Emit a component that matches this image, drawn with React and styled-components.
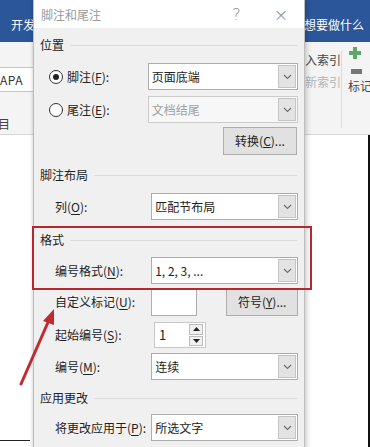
import React from "react";
import styled, { createGlobalStyle } from "styled-components";

const GlobalStyle = createGlobalStyle`
  html, body { margin: 0; padding: 0; }
  body {
    font-family: "Noto Sans CJK SC", "Noto Sans", "Liberation Sans", sans-serif;
    background: #ffffff;
  }
`;

// --- Word window behind the dialog ---

const Screen = styled.div`
  position: relative;
  width: 370px;
  height: 447px;
  overflow: hidden;
  display: flex;
  flex-direction: column;
  background: #ffffff;
`;

const TopBand = styled.div`
  height: 42px;
  flex-shrink: 0;
  background: #2b579a;
  display: flex;
  justify-content: space-between;
  align-items: flex-end;
  padding: 0 6px 8px 11px;
  color: #ffffff;
  font-size: 12px;
  line-height: 18px;
  box-sizing: border-box;
`;

const Ribbon = styled.div`
  height: 92px;
  flex-shrink: 0;
  background: #f4f4f4;
  border-bottom: 1px solid #d6d6d6;
  display: flex;
  justify-content: space-between;
  font-size: 12px;
  color: #444;
`;

const RibbonLeft = styled.div`
  width: 33px;
  display: flex;
  flex-direction: column;
  padding-top: 25px;
`;

const StyleBox = styled.div`
  height: 23px;
  border-top: 1px solid #c6c6c6;
  border-bottom: 1px solid #c6c6c6;
  background: #ffffff;
  display: flex;
  align-items: center;
  font-size: 12px;
  color: #333;
  letter-spacing: 0.5px;
`;

const RibbonLabel = styled.div`
  margin-top: 23px;
  line-height: 18px;
  margin-left: -2px;
`;

const RibbonRight = styled.div`
  width: 65px;
  display: flex;
  padding-top: 9px;
`;

const IndexGroup = styled.div`
  width: 42px;
  display: flex;
  flex-direction: column;
  gap: 4px;
  line-height: 18px;
  border-right: 1px solid #dcdcdc;
  margin-bottom: 6px;
`;

const IndexItem = styled.div`
  color: ${(p) => (p.$muted ? "#b5b5b5" : "#444")};
  white-space: nowrap;
`;

const MarkGroup = styled.div`
  flex: 1;
  display: flex;
  flex-direction: column;
  align-items: flex-start;
  padding-left: 6px;
  line-height: 18px;
  white-space: nowrap;
  margin-top: -4px;
`;

const Doc = styled.div`
  flex: 1;
  display: flex;
  justify-content: flex-end;
  align-items: flex-end;
`;

const DocEdge = styled.div`
  width: 2px;
  align-self: stretch;
  background: #111;
`;

const BottomLine = styled.div`
  position: absolute;
  left: 0;
  top: 440px;
  width: 30px;
  height: 1px;
  background: #222;
`;

// --- Dialog ---

const Dialog = styled.div`
  position: absolute;
  left: 33px;
  top: 0;
  width: 272px;
  height: 470px;
  background: #f0f0f0;
  border-left: 1px solid #bdbdbd;
  border-right: 1px solid #bdbdbd;
  box-shadow: 2px 0 5px rgba(0, 0, 0, 0.18), -1px 0 3px rgba(0, 0, 0, 0.1);
  box-sizing: border-box;
  font-size: 12px;
  color: #222;
`;

const TitleBar = styled.div`
  height: 28px;
  background: #ffffff;
  display: flex;
  align-items: center;
  padding-left: 7px;
  font-size: 12px;
  color: #9a9a9a;
`;

const TitleText = styled.div`
  flex: 1;
`;

const TitleButton = styled.div`
  width: ${(p) => p.$w || 46}px;
  text-align: center;
  color: #8a8a8a;
  font-size: ${(p) => p.$size || 14}px;
  font-family: "DejaVu Sans", sans-serif;
  font-weight: 300;
`;

const Body = styled.div`
  padding: 8px 6px 0 6px;
  display: flex;
  flex-direction: column;
`;

const Heading = styled.div`
  display: flex;
  align-items: center;
  gap: 6px;
  height: 18px;
  line-height: 18px;
  margin-top: ${(p) => p.$mt || 0}px;
  margin-bottom: ${(p) => p.$mb || 9}px;
  &::after {
    content: "";
    flex: 1;
    height: 1px;
    background: #dadada;
    margin-right: 1px;
  }
`;

const Row = styled.div`
  display: flex;
  align-items: center;
  height: ${(p) => p.$h || 27}px;
  margin-top: ${(p) => p.$mt || 0}px;
  padding-left: ${(p) => (p.$radio ? 9 : 15)}px;
`;

const Label = styled.div`
  width: ${(p) => (p.$radio ? 81 : 99)}px;
  white-space: nowrap;
  line-height: 18px;
  u {
    text-underline-offset: 2px;
  }
`;

const RadioCircle = styled.div`
  width: 12px;
  height: 12px;
  border-radius: 50%;
  border: 1px solid #333;
  background: #fff;
  margin-right: 4px;
  display: flex;
  align-items: center;
  justify-content: center;
  flex-shrink: 0;
  &::after {
    content: "";
    width: 6px;
    height: 6px;
    border-radius: 50%;
    background: ${(p) => (p.$checked ? "#222" : "transparent")};
  }
`;

const Select = styled.div`
  width: 151px;
  height: 100%;
  box-sizing: border-box;
  border: 1px solid ${(p) => (p.$disabled ? "#cccccc" : "#adadad")};
  background: ${(p) => (p.$disabled ? "#f7f7f7" : "#ffffff")};
  display: flex;
  align-items: stretch;
  color: ${(p) => (p.$disabled ? "#a0a0a0" : "#222")};
`;

const SelectValue = styled.div`
  flex: 1;
  display: flex;
  align-items: center;
  padding-left: 3px;
  line-height: 18px;
`;

const SelectArrow = styled.div`
  width: 16px;
  margin: 1px;
  background: #e3e3e3;
  border: 1px solid #c4c4c4;
  display: flex;
  align-items: center;
  justify-content: center;
`;

const Button = styled.div`
  width: 74px;
  height: 100%;
  box-sizing: border-box;
  background: #e1e1e1;
  border: 1px solid #adadad;
  display: flex;
  align-items: center;
  justify-content: center;
  line-height: 18px;
  color: #222;
  margin-left: ${(p) => p.$ml || 0}px;
`;

const ButtonRow = styled.div`
  display: flex;
  justify-content: flex-end;
  height: 28px;
  margin-top: 4px;
  padding-right: 1px;
`;

const TextBox = styled.div`
  width: 48px;
  height: 100%;
  box-sizing: border-box;
  background: #fff;
  border: 1px solid #adadad;
`;

const SpinBox = styled.div`
  width: 52px;
  height: 100%;
  box-sizing: border-box;
  background: #fff;
  border: 1px solid #c9c9c9;
  display: flex;
  align-items: center;
  padding: 1px;
`;

const SpinValue = styled.div`
  flex: 1;
  padding-left: 3px;
  line-height: 18px;
  font-size: 13px;
`;

const SpinButtons = styled.div`
  width: 14px;
  align-self: stretch;
  display: flex;
  flex-direction: column;
  gap: 1px;
  margin-right: 1px;
`;

const SpinButton = styled.div`
  flex: 1;
  background: #f0f0f0;
  border: 1px solid #bcbcbc;
  display: flex;
  align-items: center;
  justify-content: center;
`;

// --- annotations laid over the screenshot ---

const RedBox = styled.div`
  position: absolute;
  left: 32px;
  top: 226px;
  width: 280px;
  height: 64px;
  box-sizing: border-box;
  border: 2px solid #b8272e;
`;

const ArrowSvg = styled.svg`
  position: absolute;
  left: 0;
  top: 290px;
`;

const Chevron = () => (
  <svg width="9" height="6" viewBox="0 0 9 6">
    <path d="M1 1 L4.5 4.5 L8 1" fill="none" stroke="#6d6d6d" strokeWidth="1.1" />
  </svg>
);

const Triangle = ({ up }) => (
  <svg width="7" height="4" viewBox="0 0 7 4">
    <path d={up ? "M0 4 L3.5 0 L7 4 Z" : "M0 0 L3.5 4 L7 0 Z"} fill="#222" />
  </svg>
);

const Dropdown = ({ value, disabled }) => (
  <Select $disabled={disabled}>
    <SelectValue>{value}</SelectValue>
    <SelectArrow>
      <Chevron />
    </SelectArrow>
  </Select>
);

const App = () => {
  return (
    <>
      <GlobalStyle />
      <Screen>
        <TopBand>
          <span>开发</span>
          <span>想要做什么</span>
        </TopBand>
        <Ribbon>
          <RibbonLeft>
            <StyleBox>APA</StyleBox>
            <RibbonLabel>目</RibbonLabel>
          </RibbonLeft>
          <RibbonRight>
            <IndexGroup>
              <IndexItem>入索引</IndexItem>
              <IndexItem $muted>新索引</IndexItem>
            </IndexGroup>
            <MarkGroup>
              <svg width="14" height="30" viewBox="0 0 14 30">
                <path d="M5 0 H9 V4 H13 V8 H9 V12 H5 V8 H1 V4 H5 Z" fill="#5aa86a" />
                <rect x="3" y="22" width="11" height="5" fill="#777" />
              </svg>
              <span>标记</span>
            </MarkGroup>
          </RibbonRight>
        </Ribbon>
        <Doc>
          <DocEdge />
        </Doc>
        <BottomLine />

        <Dialog>
          <TitleBar>
            <TitleText>脚注和尾注</TitleText>
            <TitleButton $size={16} $w={43}>?</TitleButton>
            <TitleButton $size={18}>×</TitleButton>
          </TitleBar>
          <Body>
            <Heading>位置</Heading>
            <Row $radio>
              <RadioCircle $checked />
              <Label $radio>
                脚注(<u>F</u>):
              </Label>
              <Dropdown value="页面底端" />
            </Row>
            <Row $radio $mt={6}>
              <RadioCircle />
              <Label $radio>
                尾注(<u>E</u>):
              </Label>
              <Dropdown value="文档结尾" disabled />
            </Row>
            <ButtonRow>
              <Button>
                转换(<u>C</u>)...
              </Button>
            </ButtonRow>

            <Heading $mt={11}>脚注布局</Heading>
            <Row>
              <Label>
                列(<u>O</u>):
              </Label>
              <Dropdown value="匹配节布局" />
            </Row>

            <Heading $mt={11} $mb={8}>格式</Heading>
            <Row>
              <Label>
                编号格式(<u>N</u>):
              </Label>
              <Dropdown value="1, 2, 3, ..." />
            </Row>
            <Row $mt={4} $h={28}>
              <Label>
                自定义标记(<u>U</u>):
              </Label>
              <TextBox />
              <Button $ml={29}>
                符号(<u>Y</u>)...
              </Button>
            </Row>
            <Row $mt={6} $h={26}>
              <Label>
                起始编号(<u>S</u>):
              </Label>
              <SpinBox>
                <SpinValue>1</SpinValue>
                <SpinButtons>
                  <SpinButton>
                    <Triangle up />
                  </SpinButton>
                  <SpinButton>
                    <Triangle />
                  </SpinButton>
                </SpinButtons>
              </SpinBox>
            </Row>
            <Row $mt={5}>
              <Label>
                编号(<u>M</u>):
              </Label>
              <Dropdown value="连续" />
            </Row>

            <Heading $mt={9} $mb={7}>应用更改</Heading>
            <Row>
              <Label>
                将更改应用于(<u>P</u>):
              </Label>
              <Dropdown value="所选文字" />
            </Row>
          </Body>
        </Dialog>

        <RedBox />
        <ArrowSvg width="70" height="100" viewBox="0 0 70 100">
          <path d="M21 94 L49 30" stroke="#c22a31" strokeWidth="3" strokeLinecap="round" />
          <path d="M54 19 L43 31 L54 35 Z" fill="#c22a31" />
        </ArrowSvg>
      </Screen>
    </>
  );
};

export default App;
